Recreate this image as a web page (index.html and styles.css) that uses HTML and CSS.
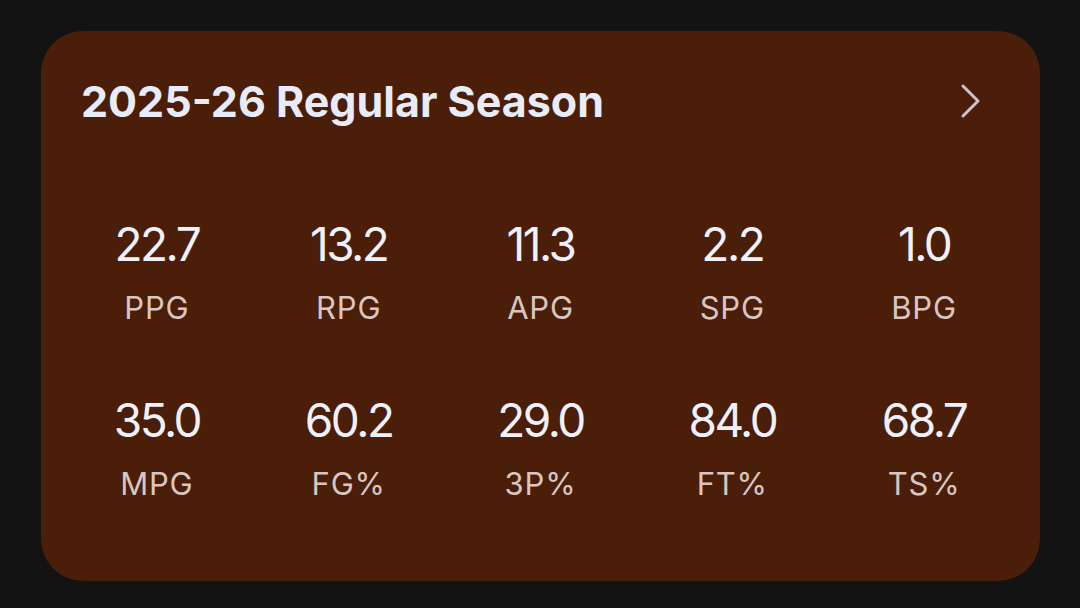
FILE: index.html
```html
<!DOCTYPE html>
<html>
<head>
<meta charset="utf-8">
<link rel="stylesheet" href="styles.css">
</head>
<body>
<div class="card">
  <div class="header">
    <h1 class="title">2025-26 Regular Season</h1>
    <svg class="chev" width="24" height="36" viewBox="0 0 24 36"><path d="M4 3 L19 18 L4 33" fill="none" stroke="#cbc3cb" stroke-width="3" stroke-linecap="round" stroke-linejoin="round"/></svg>
  </div>
  <div class="stats">
    <div class="stat"><div class="num">22.7</div><div class="lbl">PPG</div></div>
    <div class="stat"><div class="num">13.2</div><div class="lbl">RPG</div></div>
    <div class="stat"><div class="num">11.3</div><div class="lbl">APG</div></div>
    <div class="stat"><div class="num">2.2</div><div class="lbl">SPG</div></div>
    <div class="stat"><div class="num">1.0</div><div class="lbl">BPG</div></div>
    <div class="stat"><div class="num">35.0</div><div class="lbl">MPG</div></div>
    <div class="stat"><div class="num">60.2</div><div class="lbl">FG%</div></div>
    <div class="stat"><div class="num">29.0</div><div class="lbl">3P%</div></div>
    <div class="stat"><div class="num">84.0</div><div class="lbl">FT%</div></div>
    <div class="stat"><div class="num">68.7</div><div class="lbl">TS%</div></div>
  </div>
</div>
</body>
</html>
```
FILE: styles.css
```css
html, body {
  margin: 0;
  padding: 0;
  background: #131313;
  width: 1080px;
  height: 608px;
  overflow: hidden;
}
body {
  padding: 31px 40px 0 41px;
  box-sizing: border-box;
  font-family: Inter, Roboto, sans-serif;
}
.card {
  width: 999px;
  height: 550px;
  background: #4a1e08;
  border-radius: 42px;
  box-sizing: border-box;
  padding: 0 20px;
}
.header {
  display: flex;
  align-items: center;
  justify-content: space-between;
  height: 140px;
  padding: 0 0 0 20px;
}
.title {
  margin: 0;
  font-size: 43px;
  font-weight: 700;
  color: #e8ecf8;
  letter-spacing: 0;
}
.chev {
  margin-right: 37px;
}
.stats {
  display: grid;
  grid-template-columns: repeat(5, 1fr);
  row-gap: 64px;
  padding-top: 45px;
}
.stat {
  display: flex;
  flex-direction: column;
  align-items: center;
}
.num {
  font-size: 46px;
  line-height: 56px;
  color: #eef0fa;
  letter-spacing: -2.5px;
}
.lbl {
  font-size: 31px;
  line-height: 40px;
  margin-top: 16px;
  color: #d9c6c2;
  letter-spacing: 0.8px;
}
```
